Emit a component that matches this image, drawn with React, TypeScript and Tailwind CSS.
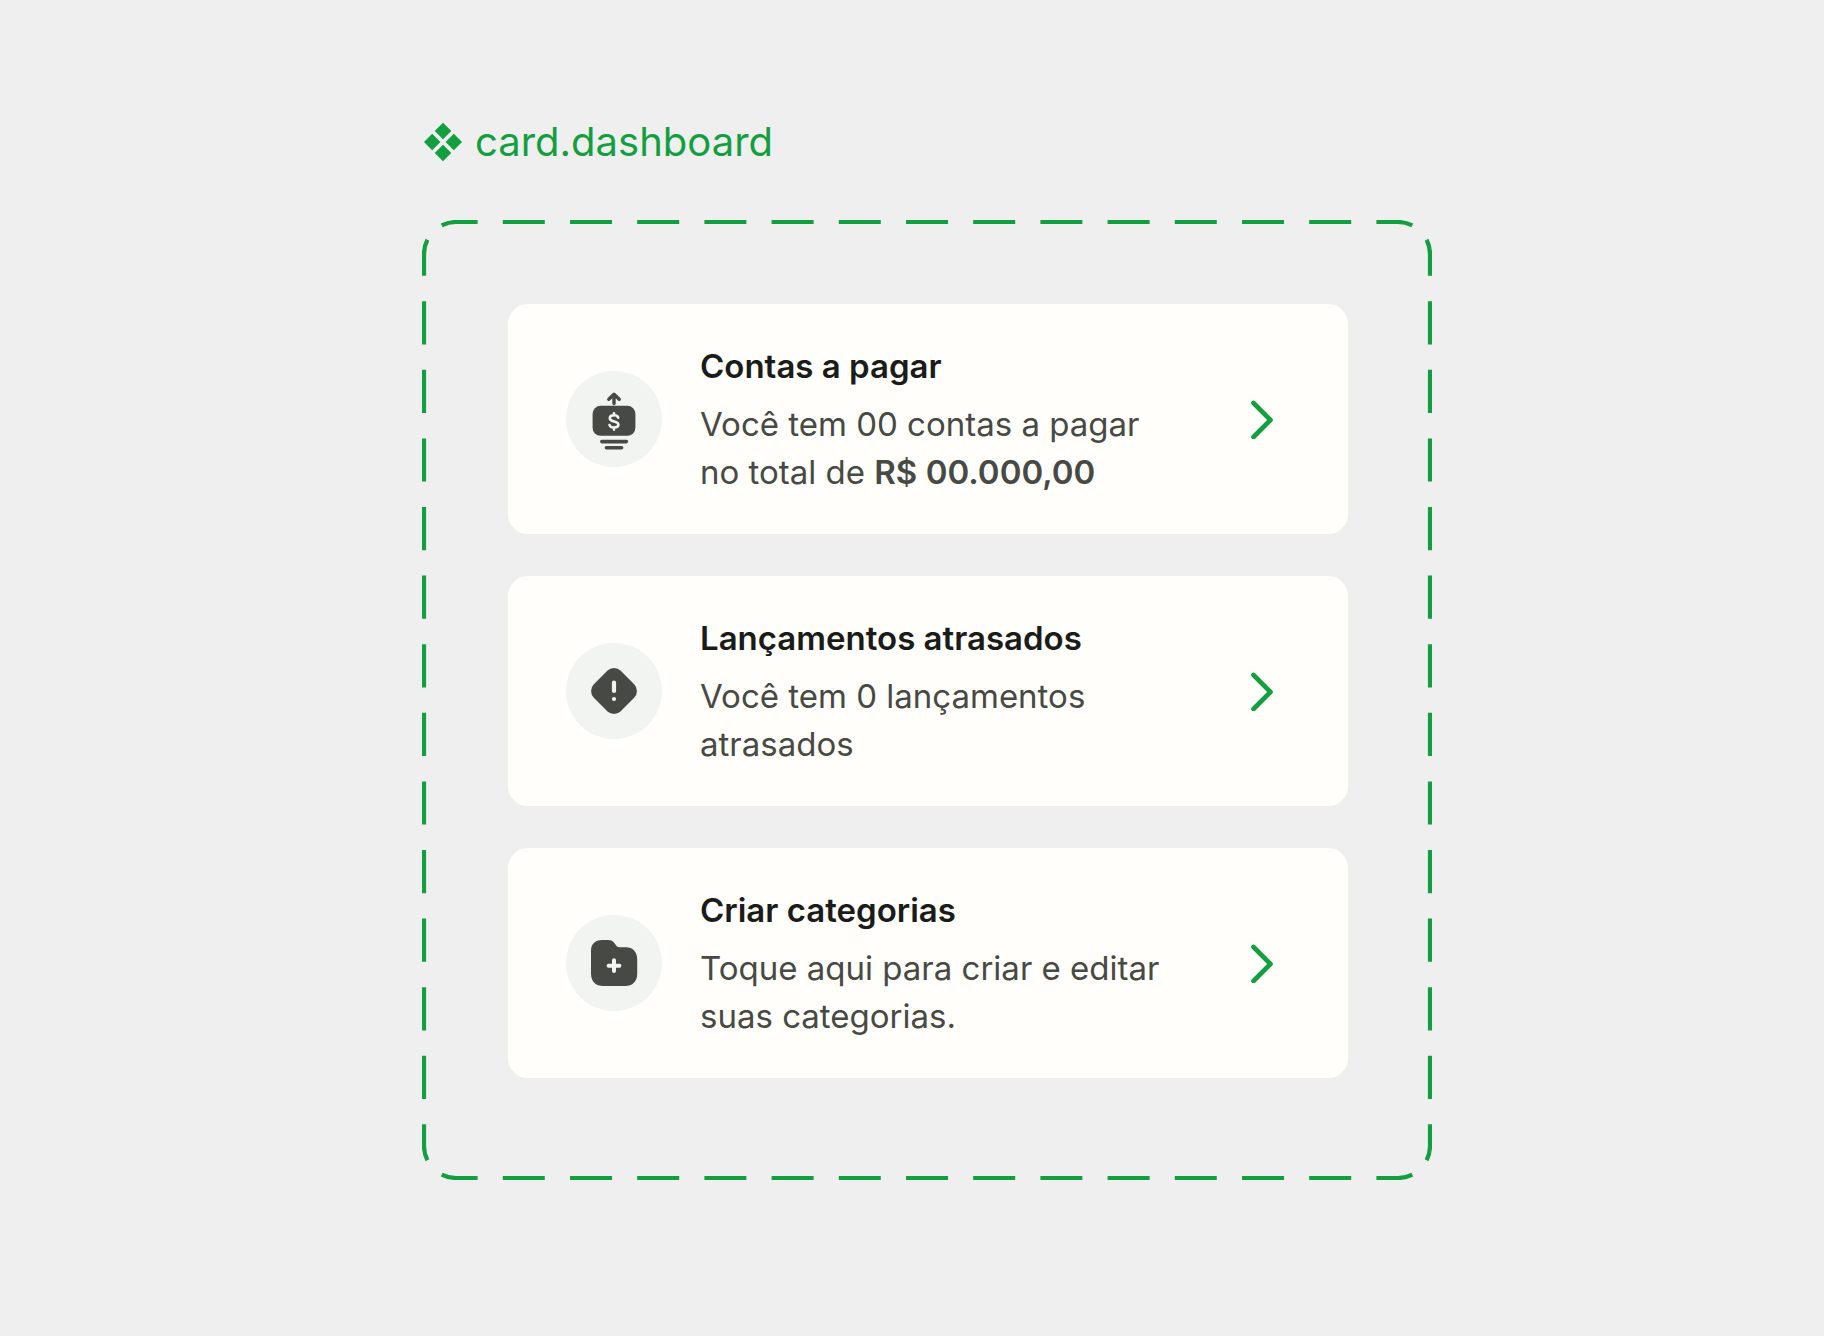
import React from 'react';

const PayableIcon = () => (
  <svg viewBox="0 0 96 96" className="size-full" fill="none" strokeLinecap="round" strokeLinejoin="round" aria-hidden="true">
    <path d="M48 32.500V24M42.800 28.200L48 23.200l5.200 5" stroke="#474944" strokeWidth="3.400" />
    <rect x="26.600" y="34.800" width="42.800" height="30" rx="8" fill="#474944" />
    <path
      d="M52.200 46.700c-.5-1.600-1.900-2.400-4.200-2.400-2.500 0-4.200 1.100-4.200 3 0 4.400 8.600 1.900 8.600 6.300 0 1.900-1.800 3-4.400 3-2.400 0-4-.9-4.500-2.600M48 42.300v2M48 56.600v2"
      stroke="#f1f4f0"
      strokeWidth="2.600"
    />
    <path d="M35.800 70.600h24.600M40.400 76.800h15.200" stroke="#474944" strokeWidth="3.600" />
  </svg>
);

const OverdueIcon = () => (
  <svg viewBox="0 0 96 96" className="size-full" fill="none" strokeLinecap="round" aria-hidden="true">
    <rect x="29" y="29" width="38" height="38" rx="9.500" transform="rotate(45 48 48)" fill="#474944" />
    <path d="M48 39.500v8.500" stroke="#f1f4f0" strokeWidth="4.200" />
    <circle cx="48" cy="56" r="2.100" fill="#f1f4f0" />
  </svg>
);

const CategoryIcon = () => (
  <svg viewBox="0 0 96 96" className="size-full" fill="none" strokeLinecap="round" aria-hidden="true">
    <path
      d="M25 36c0-7 4-11 11-11h6c3 0 5 1 6.500 3.200l1.300 1.900c1 1.500 2 2.200 4 2.200H59.500C67 32.300 71.200 37 71.200 44v15C71.200 66.500 66.500 71 59 71H37.500C29.500 71 25 66.500 25 58.500z"
      fill="#474944"
    />
    <path d="M48 45.300v10.800M42.600 50.700h10.800" stroke="#f1f4f0" strokeWidth="4" />
  </svg>
);

const Chevron = () => (
  <svg viewBox="0 0 24 40" className="h-10 w-6 shrink-0" fill="none" stroke="#139f3f" strokeWidth="4.600" strokeLinecap="round" strokeLinejoin="round" aria-hidden="true">
    <path d="M3.500 4L20.500 21L3.500 38" />
  </svg>
);

const DashedFrame = () => (
  <svg viewBox="0 0 1010 960" preserveAspectRatio="none" className="absolute inset-0 size-full pointer-events-none" fill="none" stroke="#139f3f" strokeWidth="4.200" aria-hidden="true">
    {/* Corners */}
    <path d="M19.700 5.400A32 32 0 0 1 34 2H55.600M5.400 19.700A32 32 0 0 0 2 34V55.800" />
    <path d="M990.300 5.400A32 32 0 0 0 976 2H954.400M1004.600 19.700A32 32 0 0 1 1008 34V55.800" />
    <path d="M19.700 954.600A32 32 0 0 0 34 958H55.600M5.400 940.300A32 32 0 0 1 2 926V904.200" />
    <path d="M990.300 954.600A32 32 0 0 1 976 958H954.400M1004.600 940.300A32 32 0 0 0 1008 926V904.200" />
    {/* Sides */}
    <path d="M80.800 2H930M80.800 958H930" strokeDasharray="42 25.200" />
    <path d="M2 81.200V880M1008 81.200V880" strokeDasharray="43.200 25.400" />
  </svg>
);

const cards = [
  {
    title: 'Contas a pagar',
    text: (
      <>
        Você tem 00 contas a pagar
        <br />
        no total de <strong className="font-semibold">R$ 00.000,00</strong>
      </>
    ),
    href: '#contas',
    icon: PayableIcon,
  },
  { title: 'Lançamentos atrasados', text: 'Você tem 0 lançamentos atrasados', href: '#lancamentos', icon: OverdueIcon },
  { title: 'Criar categorias', text: 'Toque aqui para criar e editar suas categorias.', href: '#categorias', icon: CategoryIcon },
];

const App = () => {
  return (
    <main className="min-h-screen bg-[#efefef] pt-[118px] pb-16 pl-[30px] font-['Inter',sans-serif]">
      <div className="mx-auto max-w-[1010px]">
        <header className="flex items-center gap-3 text-[#139f3f]">
          <svg viewBox="0 0 40 40" className="size-10 ml-px shrink-0" fill="currentColor" aria-hidden="true">
            <path d="M20 .8l8.300 8.200L20 17.200 11.700 9zM9.200 11.700l8.200 8.300-8.200 8.300L1 20zM30.800 11.700L39 20l-8.200 8.300-8.200-8.300zM20 22.800l8.300 8.200-8.300 8.200-8.300-8.200z" />
          </svg>
          <h1 className="text-[40px] leading-12 font-[370]">card.dashboard</h1>
        </header>

        <section className="relative mt-[54px] pt-[84px] pr-[84px] pb-[102px] pl-[86px]">
          <DashedFrame />
          <div className="flex flex-col gap-[42px]">
            {cards.map((card) => (
              <a key={card.title} href={card.href} className="flex items-center rounded-[20px] bg-[#fffefa] py-9 pr-[74px] pl-[58px]">
                <span className="size-24 shrink-0 rounded-full bg-[#f1f4f0]">
                  <card.icon />
                </span>
                <div className="ml-[38px] flex-1 pb-0.5">
                  <h2 className="text-[33px] leading-[52px] font-semibold text-[#1a1c19]">{card.title}</h2>
                  <p className="mt-2 max-w-[470px] text-[33px] leading-12 font-[370] text-[#474944]">{card.text}</p>
                </div>
                <Chevron />
              </a>
            ))}
          </div>
        </section>
      </div>
    </main>
  );
};

export default App;
